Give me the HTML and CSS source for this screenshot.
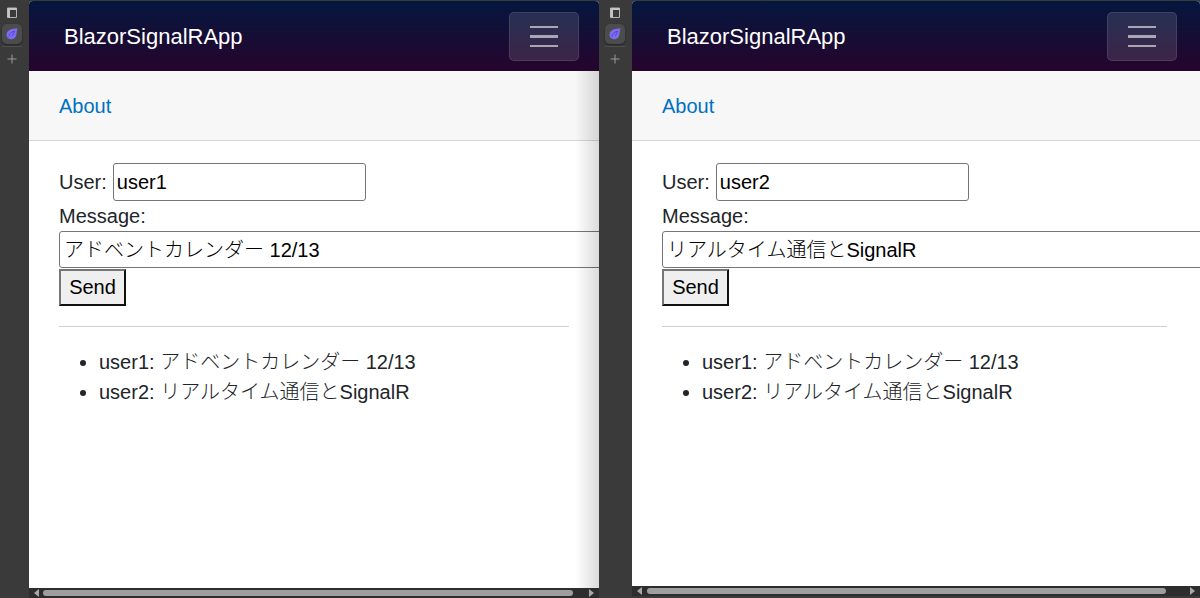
FILE: index.html
```html
<!DOCTYPE html>
<html lang="ja">
<head>
  <meta charset="UTF-8" />
  <title>BlazorSignalRApp</title>
  <link rel="stylesheet" href="styles.css">
</head>
<body>

  <div class="strip">
    <svg class="strip-layout" width="12" height="12" viewBox="0 0 12 12">
      <path d="M1.5 1H10.5V10.5H1.5Z" fill="none" stroke="#b4b4b4" stroke-width="1"/>
      <path d="M1.5 1H10.5V3H4V10.5H1.5Z" fill="#c4c4c4"/>
    </svg>
    <div class="strip-tab">
      <svg width="14" height="14" viewBox="0 0 14 14">
        <path d="M12.6 1.6C9.5 1.2 5 1.6 2.6 4.4 0.6 7 1.4 11 4.6 12 8 13 11 10.6 11.4 7.4 11.6 5.4 12 3.4 12.6 1.6Z" fill="#7d6cf2"/>
        <path d="M4 9.6C4 7 6.4 5 9.6 4.2 8.4 6 8.6 7.6 6.8 9" stroke="#5a45c8" stroke-width="1" fill="none"/>
      </svg>
    </div>
    <div class="strip-line"></div>
    <svg class="strip-plus" width="10" height="10" viewBox="0 0 10 10">
      <path d="M5 0.5V9.5M0.5 5H9.5" stroke="#9c9c9c" stroke-width="1" fill="none"/>
    </svg>
  </div>

  <div class="pane first">
    <div class="viewport">
      <div class="navbar">
        <span class="brand">BlazorSignalRApp</span>
        <button class="toggler"><span></span><span></span><span></span></button>
      </div>
      <div class="top-row"><a href="#">About</a></div>
      <div class="content">
        <div class="field">User: <input class="user-input" type="text" value="user1"></div>
        <div class="field message-label">Message:</div>
        <input class="msg-input" type="text" value="アドベントカレンダー 12/13">
        <button class="send">Send</button>
        <hr>
        <ul>
          <li>user1: アドベントカレンダー 12/13</li>
          <li>user2: リアルタイム通信とSignalR</li>
        </ul>
      </div>
      <div class="edge-shadow"></div>
    </div>
    <div class="scrollbar">
      <span class="arrow left"></span>
      <span class="thumb"></span>
      <span class="arrow right"></span>
    </div>
  </div>

  <div class="strip second">
    <svg class="strip-layout" width="12" height="12" viewBox="0 0 12 12">
      <path d="M1.5 1H10.5V10.5H1.5Z" fill="none" stroke="#b4b4b4" stroke-width="1"/>
      <path d="M1.5 1H10.5V3H4V10.5H1.5Z" fill="#c4c4c4"/>
    </svg>
    <div class="strip-tab">
      <svg width="14" height="14" viewBox="0 0 14 14">
        <path d="M12.6 1.6C9.5 1.2 5 1.6 2.6 4.4 0.6 7 1.4 11 4.6 12 8 13 11 10.6 11.4 7.4 11.6 5.4 12 3.4 12.6 1.6Z" fill="#7d6cf2"/>
        <path d="M4 9.6C4 7 6.4 5 9.6 4.2 8.4 6 8.6 7.6 6.8 9" stroke="#5a45c8" stroke-width="1" fill="none"/>
      </svg>
    </div>
    <div class="strip-line"></div>
    <svg class="strip-plus" width="10" height="10" viewBox="0 0 10 10">
      <path d="M5 0.5V9.5M0.5 5H9.5" stroke="#9c9c9c" stroke-width="1" fill="none"/>
    </svg>
  </div>

  <div class="pane last">
    <div class="viewport">
      <div class="navbar">
        <span class="brand">BlazorSignalRApp</span>
        <button class="toggler"><span></span><span></span><span></span></button>
      </div>
      <div class="top-row"><a href="#">About</a></div>
      <div class="content">
        <div class="field">User: <input class="user-input" type="text" value="user2"></div>
        <div class="field message-label">Message:</div>
        <input class="msg-input" type="text" value="リアルタイム通信とSignalR">
        <button class="send">Send</button>
        <hr>
        <ul>
          <li>user1: アドベントカレンダー 12/13</li>
          <li>user2: リアルタイム通信とSignalR</li>
        </ul>
      </div>
    </div>
    <div class="scrollbar">
      <span class="arrow left"></span>
      <span class="thumb"></span>
      <span class="arrow right"></span>
    </div>
  </div>

</body>
</html>
```

FILE: styles.css
```css
* {
  box-sizing: border-box;
}

html, body {
  height: 100%;
}

body {
  margin: 0;
  display: flex;
  overflow: hidden;
  background: #3a3a3a;
  color: #212529;
  font-family: "Liberation Sans", "Noto Sans CJK JP", sans-serif;
  font-size: 20px;
  font-weight: 300;
}

/* side strips */
.strip {
  width: 29px;
  flex: none;
  display: flex;
  flex-direction: column;
  align-items: center;
  padding: 7px 6px 0 0;
}

.strip.second {
  width: 33px;
  padding: 7px 1px 0 0;
}

.strip-layout {
  display: block;
}

.strip-tab {
  width: 20px;
  height: 20px;
  margin-top: 5px;
  display: flex;
  align-items: center;
  justify-content: center;
  background: #4c4c4c;
  border-radius: 5px;
  box-shadow: 0 1px 2px rgba(0,0,0,0.4);
}

.strip-line {
  width: 20px;
  height: 1px;
  margin-top: 2px;
  background: #4f4f4f;
}

.strip-plus {
  display: block;
  margin-top: 7px;
}

/* panes */
.pane {
  display: flex;
  flex-direction: column;
  overflow: hidden;
  margin-top: 1px;
  border-radius: 4px 4px 0 0;
}

.pane.first {
  width: 570px;
  height: 597px;
}

.pane.last {
  width: 568px;
  height: 595px;
}

.viewport {
  position: relative;
  flex: 1;
  overflow: hidden;
  background: white;
}

.edge-shadow {
  position: absolute;
  top: 70px;
  right: 0;
  bottom: 0;
  width: 24px;
  background: linear-gradient(to right, rgba(0,0,0,0), rgba(0,0,0,0.14));
}

.navbar {
  height: 70px;
  display: flex;
  align-items: center;
  justify-content: space-between;
  padding: 1px 20px 0 35px;
  background: linear-gradient(to bottom, #04173f, #27042c);
}

.last .navbar {
  padding-right: 23px;
}

.brand {
  color: white;
  font-size: 22px;
}

.toggler {
  width: 70px;
  height: 49px;
  display: flex;
  flex-direction: column;
  align-items: center;
  justify-content: center;
  gap: 7px;
  padding: 0;
  background: rgba(255,255,255,0.12);
  border: 1px solid rgba(255,255,255,0.1);
  border-radius: 5px;
}

.toggler span {
  width: 28px;
  height: 2.4px;
  background: rgba(255,255,255,0.58);
}

.top-row {
  height: 70px;
  display: flex;
  align-items: center;
  padding: 2px 0 0 30px;
  background: #f7f7f7;
  border-bottom: 1px solid #d6d5d5;
}

.top-row a {
  color: #0071c1;
  text-decoration: none;
}

.content {
  width: 570px;
  padding: 22px 30px 0;
}

.field {
  display: flex;
  align-items: center;
  gap: 6px;
}

.message-label {
  height: 30px;
}

.user-input {
  width: 253px;
  height: 38px;
  padding: 1px 3px;
  font: inherit;
  font-weight: 400;
  color: black;
  border: 1px solid #767676;
  border-radius: 3px;
}

.msg-input {
  display: block;
  width: 640px;
  height: 37px;
  padding: 0 4px 2px;
  font: inherit;
  color: black;
  border: 1px solid #767676;
  border-radius: 3px;
}

.send {
  display: block;
  width: 67px;
  height: 37px;
  margin-top: 1px;
  padding: 0;
  font: inherit;
  font-weight: 400;
  color: black;
  background: #efefef;
  border: 2px solid;
  border-color: #767676 #111 #111 #767676;
}

hr {
  width: 510px;
  height: 1px;
  margin: 20px 0;
  border: none;
  background: #cfcfcf;
}

.last hr {
  width: 505px;
}

ul {
  margin: 0;
  padding-left: 40px;
}

li {
  line-height: 30px;
}

/* horizontal scrollbar */
.scrollbar {
  height: 10px;
  flex: none;
  display: flex;
  align-items: center;
  background: #2d2d2d;
}

.thumb {
  width: 530px;
  height: 6px;
  margin-left: 1px;
  background: #9e9e9e;
  border-radius: 3px;
}

.last .thumb {
  width: 519px;
  margin-left: 2px;
}

.arrow {
  width: 0;
  height: 0;
  margin: 0 3px 0 3px;
  border-top: 4px solid transparent;
  border-bottom: 4px solid transparent;
}

.arrow.left {
  margin-left: 5px;
  border-right: 5px solid #a8a8a8;
}

.arrow.right {
  margin-left: auto;
  margin-right: 5px;
  border-left: 5px solid #a8a8a8;
}
```
